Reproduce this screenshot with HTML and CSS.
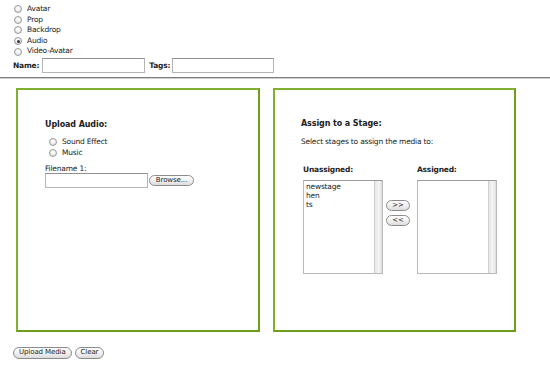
FILE: index.html
```html
<!DOCTYPE html>
<html>
<head>
<meta charset="utf-8">
<link rel="stylesheet" href="styles.css">
</head>
<body>
<div class="top">
  <label class="radio-row"><input type="radio" name="type" class="radio"> Avatar</label>
  <label class="radio-row"><input type="radio" name="type" class="radio"> Prop</label>
  <label class="radio-row"><input type="radio" name="type" class="radio"> Backdrop</label>
  <label class="radio-row"><input type="radio" name="type" class="radio" checked> Audio</label>
  <label class="radio-row"><input type="radio" name="type" class="radio"> Video-Avatar</label>
  <div class="meta-row">
    <span class="meta-label">Name:</span><input type="text" class="text-in name-in">
    <span class="meta-label tags-label">Tags:</span><input type="text" class="text-in tags-in">
  </div>
</div>
<div class="rule"></div>
<div class="panels">
  <section class="box box-left">
    <h2 class="box-title">Upload Audio:</h2>
    <div class="sub-radios">
      <label class="radio-row"><input type="radio" name="kind" class="radio"> Sound Effect</label>
      <label class="radio-row"><input type="radio" name="kind" class="radio"> Music</label>
    </div>
    <div class="file-label">Filename 1:</div>
    <div class="file-row">
      <input type="text" class="text-in file-in">
      <button class="btn browse">Browse...</button>
    </div>
  </section>
  <section class="box box-right">
    <h2 class="box-title">Assign to a Stage:</h2>
    <p class="hint">Select stages to assign the media to:</p>
    <div class="assign">
      <div class="col-label">Unassigned:</div>
      <div></div>
      <div class="col-label">Assigned:</div>
      <div class="listbox">
        <ul class="items">
          <li>newstage</li>
          <li>hen</li>
          <li>ts</li>
        </ul>
        <div class="scroll"></div>
      </div>
      <div class="movers">
        <button class="btn mover">&gt;&gt;</button>
        <button class="btn mover">&lt;&lt;</button>
      </div>
      <div class="listbox">
        <ul class="items"></ul>
        <div class="scroll"></div>
      </div>
    </div>
  </section>
</div>
<div class="actions">
  <button class="btn action">Upload Media</button>
  <button class="btn action">Clear</button>
</div>
</body>
</html>
```
FILE: styles.css
```css
* { box-sizing: border-box; }
body {
  margin: 0;
  font-family: "DejaVu Sans", Verdana, sans-serif;
  font-size: 7.5px;
  letter-spacing: -0.2px;
  color: #222;
  background: #fff;
}
.top { padding: 4px 0 0 14px; }
.radio-row {
  display: flex;
  align-items: center;
  height: 10.6px;
  line-height: 10.6px;
}
.radio {
  appearance: none;
  -webkit-appearance: none;
  width: 8px;
  height: 8px;
  margin: 0 5px 0 0;
  border: 1px solid #9a9a9a;
  border-radius: 50%;
  background: radial-gradient(circle at 50% 35%, #fff 0, #f2f2f2 45%, #cfcfcf 100%);
  position: relative;
  flex: none;
}
.radio:checked::after {
  content: "";
  position: absolute;
  left: 1.5px;
  top: 1.5px;
  width: 3px;
  height: 3px;
  border-radius: 50%;
  background: #333;
}
.meta-row {
  display: flex;
  align-items: center;
  margin-top: 1px;
  margin-left: -1px;
  height: 15px;
}
.meta-label { font-weight: bold; }
.tags-label { margin-left: 4px; }
.text-in {
  height: 15px;
  border: 1px solid #b5b5b5;
  border-top-color: #8f8f8f;
  background: #fff;
  padding: 0 2px;
  font: inherit;
}
.name-in { width: 103px; margin-left: 3px; }
.tags-in { width: 102px; margin-left: 2px; }
.rule {
  margin-top: 4px;
  height: 2px;
  border-top: 1px solid #7d7d7d;
  border-bottom: 1px solid #cfcfcf;
}
.panels {
  display: grid;
  grid-template-columns: 244px 243px;
  column-gap: 13px;
  padding-left: 16px;
  margin-top: 9px;
}
.box {
  height: 244px;
  border: 2px solid #7fb030;
  border-color: #7fb030 #6d9f1f #6d9f1f #7fb030;
}
.box-left { padding: 30px 0 0 27px; }
.box-right { padding: 29px 0 0 26px; }
.box-title {
  margin: 0;
  font-size: 8px;
  font-weight: bold;
  line-height: 10px;
  letter-spacing: -0.1px;
}
.sub-radios { margin: 7px 0 0 4px; }
.file-label { margin-top: 6px; line-height: 9px; }
.file-row {
  display: flex;
  align-items: center;
}
.file-in { width: 103px; height: 15px; }
.btn {
  font-family: "DejaVu Sans", Verdana, sans-serif;
  font-size: 7px;
  letter-spacing: -0.1px;
  color: #222;
  height: 11px;
  line-height: 9px;
  padding: 0 5px;
  border: 1px solid #8c8c8c;
  border-radius: 6px;
  background: linear-gradient(#ffffff, #f1f1f1 50%, #dcdcdc);
}
.browse { width: 45px; margin-left: 1px; padding: 0; }
.hint { margin: 8px 0 0 0; line-height: 9px; }
.assign {
  display: grid;
  grid-template-columns: 80px 34px 80px;
  grid-template-rows: auto 94px;
  margin-top: 19px;
  margin-left: 2px;
}
.col-label {
  font-weight: bold;
  line-height: 9px;
  margin-bottom: 6px;
}
.listbox {
  display: flex;
  border: 1px solid #b9b9b9;
  border-top-color: #9a9a9a;
  background: #fff;
}
.items {
  flex: 1;
  list-style: none;
  margin: 0;
  padding: 1px 2px;
}
.items li { line-height: 9px; }
.scroll {
  width: 8px;
  border-left: 1px solid #d0d0d0;
  background: linear-gradient(90deg, #e4e4e4, #f6f6f6 50%, #dedede);
}
.movers {
  display: flex;
  flex-direction: column;
  align-items: center;
  padding: 20px 4px 0 0;
  gap: 4px;
}
.mover { width: 24px; padding: 0; }
.actions {
  display: flex;
  gap: 3px;
  padding: 15px 0 0 13px;
}
.action { height: 12px; padding: 0 5px; }
```
